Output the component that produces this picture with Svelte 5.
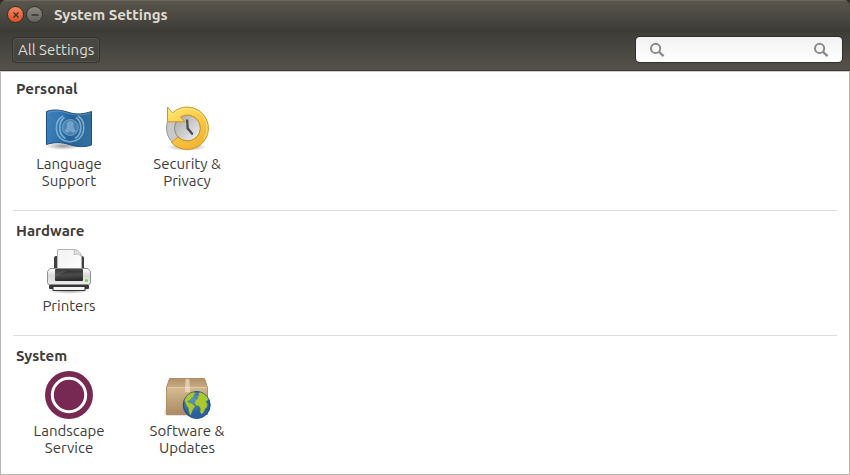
<script>
  const sections = [
    { title: 'Personal', items: [['language', 'Language Support'], ['security', 'Security & Privacy']] },
    { title: 'Hardware', items: [['printer', 'Printers']] },
    { title: 'System', items: [['landscape', 'Landscape Service'], ['software', 'Software & Updates']] }
  ];
</script>

{#snippet magnifier()}
  <svg width="16" height="16" viewBox="0 0 16 16" fill="none" stroke="#8a8a8a" aria-hidden="true">
    <circle cx="6.6" cy="6.4" r="4.6" stroke-width="2" />
    <path d="M10 9.8 14.6 14.2" stroke-width="2.3" />
  </svg>
{/snippet}

{#snippet icon(name)}
  <svg class="icon" width="48" height="48" viewBox="0 0 48 48" aria-hidden="true">
    {#if name === 'language'}
      <defs>
        <linearGradient id="flag" x2="1" y2=".15">
          <stop offset="0" stop-color="#4385bd" /><stop offset=".35" stop-color="#2e74ac" />
          <stop offset=".6" stop-color="#246199" /><stop offset="1" stop-color="#306f9f" />
        </linearGradient>
        <radialGradient id="flagShade"><stop offset="0" stop-color="#000" stop-opacity=".4" /><stop offset="1" stop-color="#000" stop-opacity="0" /></radialGradient>
      </defs>
      <ellipse cx="18" cy="42" rx="18" ry="4" fill="url(#flagShade)" />
      <path d="M1.500 7.500C9 4.800 16 6 24 8.500s15 1.500 22.500-1v33.500c-7 2.500-15 2-22.500-.5s-15-2.500-22.500 0z" fill="url(#flag)" stroke="#1d4f80" />
      <path d="M2.500 8.500C9 6 16 7 24 9.500s15 1.500 21.500-.5" fill="none" stroke="#7eabd0" stroke-opacity=".5" />
      <g fill="none" stroke="#a5cbe5" stroke-opacity=".65">
        <path d="M18 12C9 17 9 32 19 36.500l6 1.500 6-1.500C41 32 41 17 33 12" stroke-width="1.600" />
        <path d="M19.500 13.500C13 18 13 30 20.500 34.500M31 13.500C37.500 18 37.500 30 30 34.500" stroke-width="1.800" />
      </g>
      <circle cx="25.300" cy="23.500" r="8" fill="#9bc3df" fill-opacity=".3" stroke="#a5cbe5" stroke-opacity=".5" />
      <path d="M22 18.500q3.300-3 6.600 0v5l2.400 4-3 1.500-2.700-2-2.700 2-3-1.500 2.400-4z" fill="#a8cde6" fill-opacity=".45" />
    {:else if name === 'security'}
      <defs>
        <linearGradient id="gold" x2=".6" y2="1"><stop offset="0" stop-color="#ffe878" /><stop offset=".5" stop-color="#fbcb48" /><stop offset="1" stop-color="#f2b433" /></linearGradient>
        <linearGradient id="face" x2="1" y2="1"><stop offset="0" stop-color="#a4a4a4" /><stop offset="1" stop-color="#f4f4f4" /></linearGradient>
        <radialGradient id="clockShade"><stop offset="0" stop-color="#000" stop-opacity=".4" /><stop offset="1" stop-color="#000" stop-opacity="0" /></radialGradient>
      </defs>
      <ellipse cx="24" cy="43" rx="20" ry="4" fill="url(#clockShade)" />
      <circle cx="24" cy="24" r="20.500" fill="#c9c9c9" stroke="#999" />
      <circle cx="24.500" cy="24" r="13" fill="url(#face)" stroke="#8a8a8a" />
      <path d="M23 15.500h2.200l.6 8.200 4.700 6-1.500 1.500-5.500-6.200z" fill="#484c52" />
      <path d="M4.500 3 9.500 9A21.200 21.200 0 1 1 8.500 38.500L15 33A13 13 0 1 0 17.500 13L22 17.800H4.500z" fill="url(#gold)" stroke="#cf951d" stroke-linejoin="round" />
      <path d="M5.500 5.700 9.500 10.500A20.200 20.200 0 0 1 41 35.500" fill="none" stroke="#fff3a4" stroke-opacity=".7" />
    {:else if name === 'printer'}
      <defs>
        <linearGradient id="body" y2="1" x2="0"><stop offset="0" stop-color="#fff" /><stop offset=".45" stop-color="#d8d8d8" /><stop offset="1" stop-color="#ededed" /></linearGradient>
        <linearGradient id="slot" y2="1" x2=".1"><stop offset="0" stop-color="#222" /><stop offset=".55" stop-color="#4c4c4c" /><stop offset="1" stop-color="#292929" /></linearGradient>
        <linearGradient id="paper" x2="1" y2="1"><stop offset="0" stop-color="#f1f1f1" /><stop offset="1" stop-color="#fff" /></linearGradient>
        <radialGradient id="printShade"><stop offset="0" stop-color="#000" stop-opacity=".45" /><stop offset="1" stop-color="#000" stop-opacity="0" /></radialGradient>
      </defs>
      <ellipse cx="24" cy="44" rx="22" ry="4" fill="url(#printShade)" />
      <rect x="9" y="10" width="30" height="17" rx="2" fill="#414141" />
      <path d="M12.500 3.500h18L36.500 9v17h-24z" fill="url(#paper)" stroke="#b4b4b4" />
      <path d="M28.500 3.500c1.500 2 1 3.500.5 5 3-.8 6-.5 7.500 2.500 0-4-4-7.500-8-7.500z" fill="#e2e2e2" stroke="#bcbcbc" />
      <path d="M5 22.500h38l2.500 3v11q0 2-2 2h-39q-2 0-2-2v-11z" fill="url(#body)" stroke="#8f8f8f" />
      <rect x="10" y="23" width="28" height="12" rx="1" fill="url(#slot)" />
      <path d="M10 31 22 25h16v-2H10z" fill="#888" fill-opacity=".25" />
      <circle cx="41.500" cy="34.500" r="1.600" fill="#75dc3c" />
      <rect x="4" y="39" width="40" height="4" rx="1" fill="#373737" />
      <path d="M8 40.500h32v4H8z" fill="#f5f5f5" stroke="#333" />
    {:else if name === 'landscape'}
      <circle cx="24" cy="24" r="24" fill="#772953" />
      <circle cx="24" cy="24" r="16.700" fill="none" stroke="#fff" stroke-width="3" />
    {:else}
      <defs>
        <linearGradient id="box" y2="1" x2=".1"><stop offset="0" stop-color="#d6bc94" /><stop offset="1" stop-color="#ac8a62" /></linearGradient>
        <linearGradient id="lid" y2="1" x2="0"><stop offset="0" stop-color="#b2916a" /><stop offset="1" stop-color="#c9ab82" /></linearGradient>
        <radialGradient id="sea" cx=".35" cy=".3"><stop offset="0" stop-color="#5c93cc" /><stop offset="1" stop-color="#2b5f9f" /></radialGradient>
      </defs>
      <path d="M2 38q-2 5 2 7h22v-5z" fill="#000" fill-opacity=".12" />
      <path d="M6.500 7.500h35l3 9h-41z" fill="url(#lid)" stroke="#b08e64" />
      <path d="M3.500 16.500h41v27h-41z" fill="url(#box)" stroke="#b08e64" />
      <path d="M4 16.500h40" stroke="#e2caa3" />
      <path d="M22.500 8h4l.5 13h-5z" fill="#f3e9d8" fill-opacity=".6" />
      <circle cx="33.700" cy="34" r="13.500" fill="url(#sea)" stroke="#204a87" />
      <path d="M21.500 30C22.500 25.500 26 22 31 21.200l1.500 1.300-2 1.500.5 1.500-2.500 1.500-1 2-2.500 1 .5 1.500 2.500.5 2.500 1.500 1.500 2-1.500 2-1.500 3-1 3-1 .5-1-3-.5-4-2-2.500-1-3zM35.500 22.500l1.500-1.300c4 1 7.500 4 8.700 7.800l-1.700.5-1 1.500 1.500 2-.5 3-2 2-1.500 3.500-2 1.500-1.500-2 .5-3-1.500-3-3-.5-1.500-2.500 1-3 2.500-1.500-.5-2 1.500-1z" fill="#a9c932" stroke="#6f9433" stroke-width=".5" />
    {/if}
  </svg>
{/snippet}

<div class="window">
  <header class="titlebar">
    <button class="control close" aria-label="Close"><svg width="8" height="8" viewBox="0 0 8 8" aria-hidden="true"><path d="M1.500 1.500l5 5m0-5l-5 5" /></svg></button>
    <button class="control" aria-label="Minimize"><svg width="8" height="8" viewBox="0 0 8 8" aria-hidden="true"><path d="M.5 4h7" /></svg></button>
    <h1>System Settings</h1>
  </header>
  <nav class="toolbar">
    <button class="all">All Settings</button>
    <label class="search">
      {@render magnifier()}
      <input type="text" aria-label="Search settings" />
      {@render magnifier()}
    </label>
  </nav>
  <main>
    {#each sections as section}
      <section>
        <h2>{section.title}</h2>
        <div class="items">
          {#each section.items as [name, label]}
            <a href="#{name}">{@render icon(name)}<span>{label}</span></a>
          {/each}
        </div>
      </section>
    {/each}
  </main>
</div>

<style>
  :global(body) { margin: 0; background: #2c2b28; }
  * { box-sizing: border-box; }
  .window {
    min-height: 100vh;
    display: flex;
    flex-direction: column;
    overflow: hidden;
    border-radius: 6px 6px 0 0;
    font: 15px/17px Ubuntu, "Noto Sans", sans-serif;
    color: #3c3c3c;
  }
  button { font: inherit; cursor: pointer; }
  .titlebar {
    height: 29px;
    display: flex;
    align-items: center;
    gap: 2px;
    padding: 0 7px;
    background: linear-gradient(#5a564d, #3f3e39);
    box-shadow: inset 0 1px #6a675e;
  }
  .control {
    width: 17px;
    height: 17px;
    display: grid;
    place-items: center;
    padding: 0;
    border: 1px solid #33322e;
    border-radius: 50%;
    background: linear-gradient(#8b8881, #65635d);
  }
  .close { background: linear-gradient(#f58560, #e2501f); }
  .control svg { fill: none; stroke: #35342f; stroke-width: 1.3; }
  h1 {
    margin: 0 9px;
    font-size: 15px;
    line-height: 17px;
    font-weight: 700;
    color: #dfdbd2;
  }
  .toolbar {
    height: 42px;
    display: flex;
    align-items: center;
    justify-content: space-between;
    padding: 0 8px 0 12px;
    background: linear-gradient(#3c3b37, #55524a);
    border-bottom: 1px solid #3a3935;
  }
  .all {
    height: 26px;
    padding: 0 5px;
    border: 1px solid #33322e;
    border-radius: 4px;
    background: linear-gradient(#4a4842, #45433e);
    box-shadow: inset 0 0 0 1px #55534c;
    color: #dfdbd2;
  }
  .search {
    width: 206px;
    height: 25px;
    display: flex;
    align-items: center;
    padding: 0 13px;
    border-radius: 4px;
    background: linear-gradient(#f2f2f2, #fff);
    box-shadow: 0 0 0 1px #302f2c;
  }
  .search svg { flex: none; }
  input {
    flex: 1;
    min-width: 0;
    padding: 0 6px;
    border: 0;
    outline: 0;
    background: none;
    font: inherit;
    color: #3c3c3c;
  }
  main {
    flex: 1;
    padding: 0 12px;
    background: #fff;
    border: 1px solid #b9b6b2;
    border-top-color: #d0cdc9;
  }
  section { padding: 7px 0 21px; }
  section + section { padding-top: 10px; border-top: 1px solid #dcdcdc; }
  section:last-child { padding-bottom: 0; }
  h2 { margin: 0 0 5px; padding: 0 3px; font-size: 15px; line-height: 20px; }
  .items { display: flex; flex-wrap: wrap; margin: 0 -3px; }
  a {
    width: 118px;
    display: flex;
    flex-direction: column;
    align-items: center;
    gap: 3px;
    padding: 0 18px;
    color: inherit;
    text-align: center;
    text-decoration: none;
  }
</style>
